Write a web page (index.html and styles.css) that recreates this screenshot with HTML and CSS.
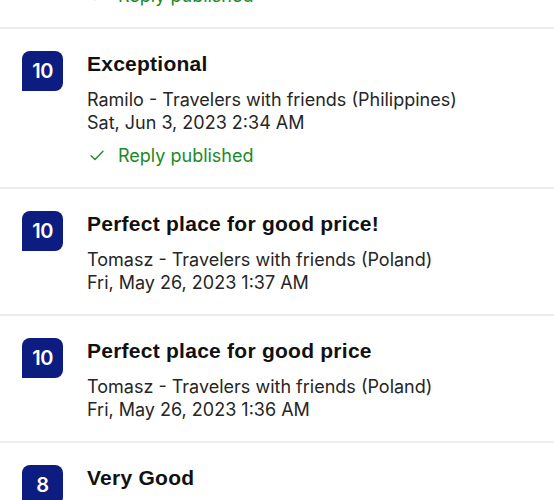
FILE: index.html
```html
<!DOCTYPE html>
<html>
<head>
<meta charset="utf-8">
<link rel="stylesheet" href="styles.css">
</head>
<body>
<div class="list">
  <div class="row partial">
    <div class="spacer"></div>
    <div class="content">
      <div class="reply"><svg class="check" viewBox="0 0 14 11" width="14" height="11"><path d="M1 5.8 L5 9.6 L13 1.2" fill="none" stroke="#1f8a2a" stroke-width="1.4" stroke-linecap="round" stroke-linejoin="round"/></svg><span>Reply published</span></div>
    </div>
  </div>
  <div class="row">
    <div class="badge">10</div>
    <div class="content">
      <div class="title">Exceptional</div>
      <div class="meta">Ramilo - Travelers with friends (Philippines)</div>
      <div class="meta">Sat, Jun 3, 2023 2:34 AM</div>
      <div class="reply"><svg class="check" viewBox="0 0 14 11" width="14" height="11"><path d="M1 5.8 L5 9.6 L13 1.2" fill="none" stroke="#1f8a2a" stroke-width="1.4" stroke-linecap="round" stroke-linejoin="round"/></svg><span>Reply published</span></div>
    </div>
  </div>
  <div class="row">
    <div class="badge">10</div>
    <div class="content">
      <div class="title">Perfect place for good price!</div>
      <div class="meta">Tomasz - Travelers with friends (Poland)</div>
      <div class="meta">Fri, May 26, 2023 1:37 AM</div>
    </div>
  </div>
  <div class="row">
    <div class="badge">10</div>
    <div class="content">
      <div class="title">Perfect place for good price</div>
      <div class="meta">Tomasz - Travelers with friends (Poland)</div>
      <div class="meta">Fri, May 26, 2023 1:36 AM</div>
    </div>
  </div>
  <div class="row">
    <div class="badge">8</div>
    <div class="content">
      <div class="title">Very Good</div>
      <div class="meta">Tomasz - Travelers with friends (Poland)</div>
      <div class="meta">Fri, May 26, 2023 1:36 AM</div>
    </div>
  </div>
</div>
</body>
</html>
```

FILE: styles.css
```css
html, body {
  margin: 0;
  padding: 0;
  background: #ffffff;
  overflow: hidden;
}
body {
  font-family: "Liberation Sans", Arial, sans-serif;
  color: #1a1a1a;
  width: 554px;
  height: 500px;
}
.list {
  display: flex;
  flex-direction: column;
}
.row {
  display: flex;
  gap: 24px;
  padding: 22px 22px 20px 22px;
  border-top: 2px solid #ededed;
}
.row.partial {
  border-top: none;
  padding-top: 0;
  margin-top: -16px;
}
.spacer {
  width: 41px;
  flex: none;
}
.badge {
  width: 41px;
  height: 40px;
  flex: none;
  background: #0c1c80;
  color: #ffffff;
  border-radius: 8px 8px 8px 0;
  display: flex;
  align-items: center;
  justify-content: center;
  font-family: Inter, "Liberation Sans", sans-serif;
  font-weight: 600;
  font-size: 20px;
  letter-spacing: -0.5px;
}
.content {
  display: flex;
  flex-direction: column;
}
.title {
  font-size: 21px;
  line-height: 26px;
  font-weight: bold;
  letter-spacing: 0.25px;
  color: #111111;
  margin-bottom: 11px;
}
.meta {
  font-family: Inter, "Liberation Sans", sans-serif;
  font-size: 18px;
  line-height: 23px;
  color: #262626;
}
.reply {
  margin-top: 10px;
  display: flex;
  align-items: center;
  gap: 14px;
  font-family: Inter, "Liberation Sans", sans-serif;
  font-size: 18px;
  line-height: 23px;
  color: #1b8a27;
}
.partial .reply {
  margin-top: 0;
}
.check {
  margin-left: 3px;
  flex: none;
}
```
